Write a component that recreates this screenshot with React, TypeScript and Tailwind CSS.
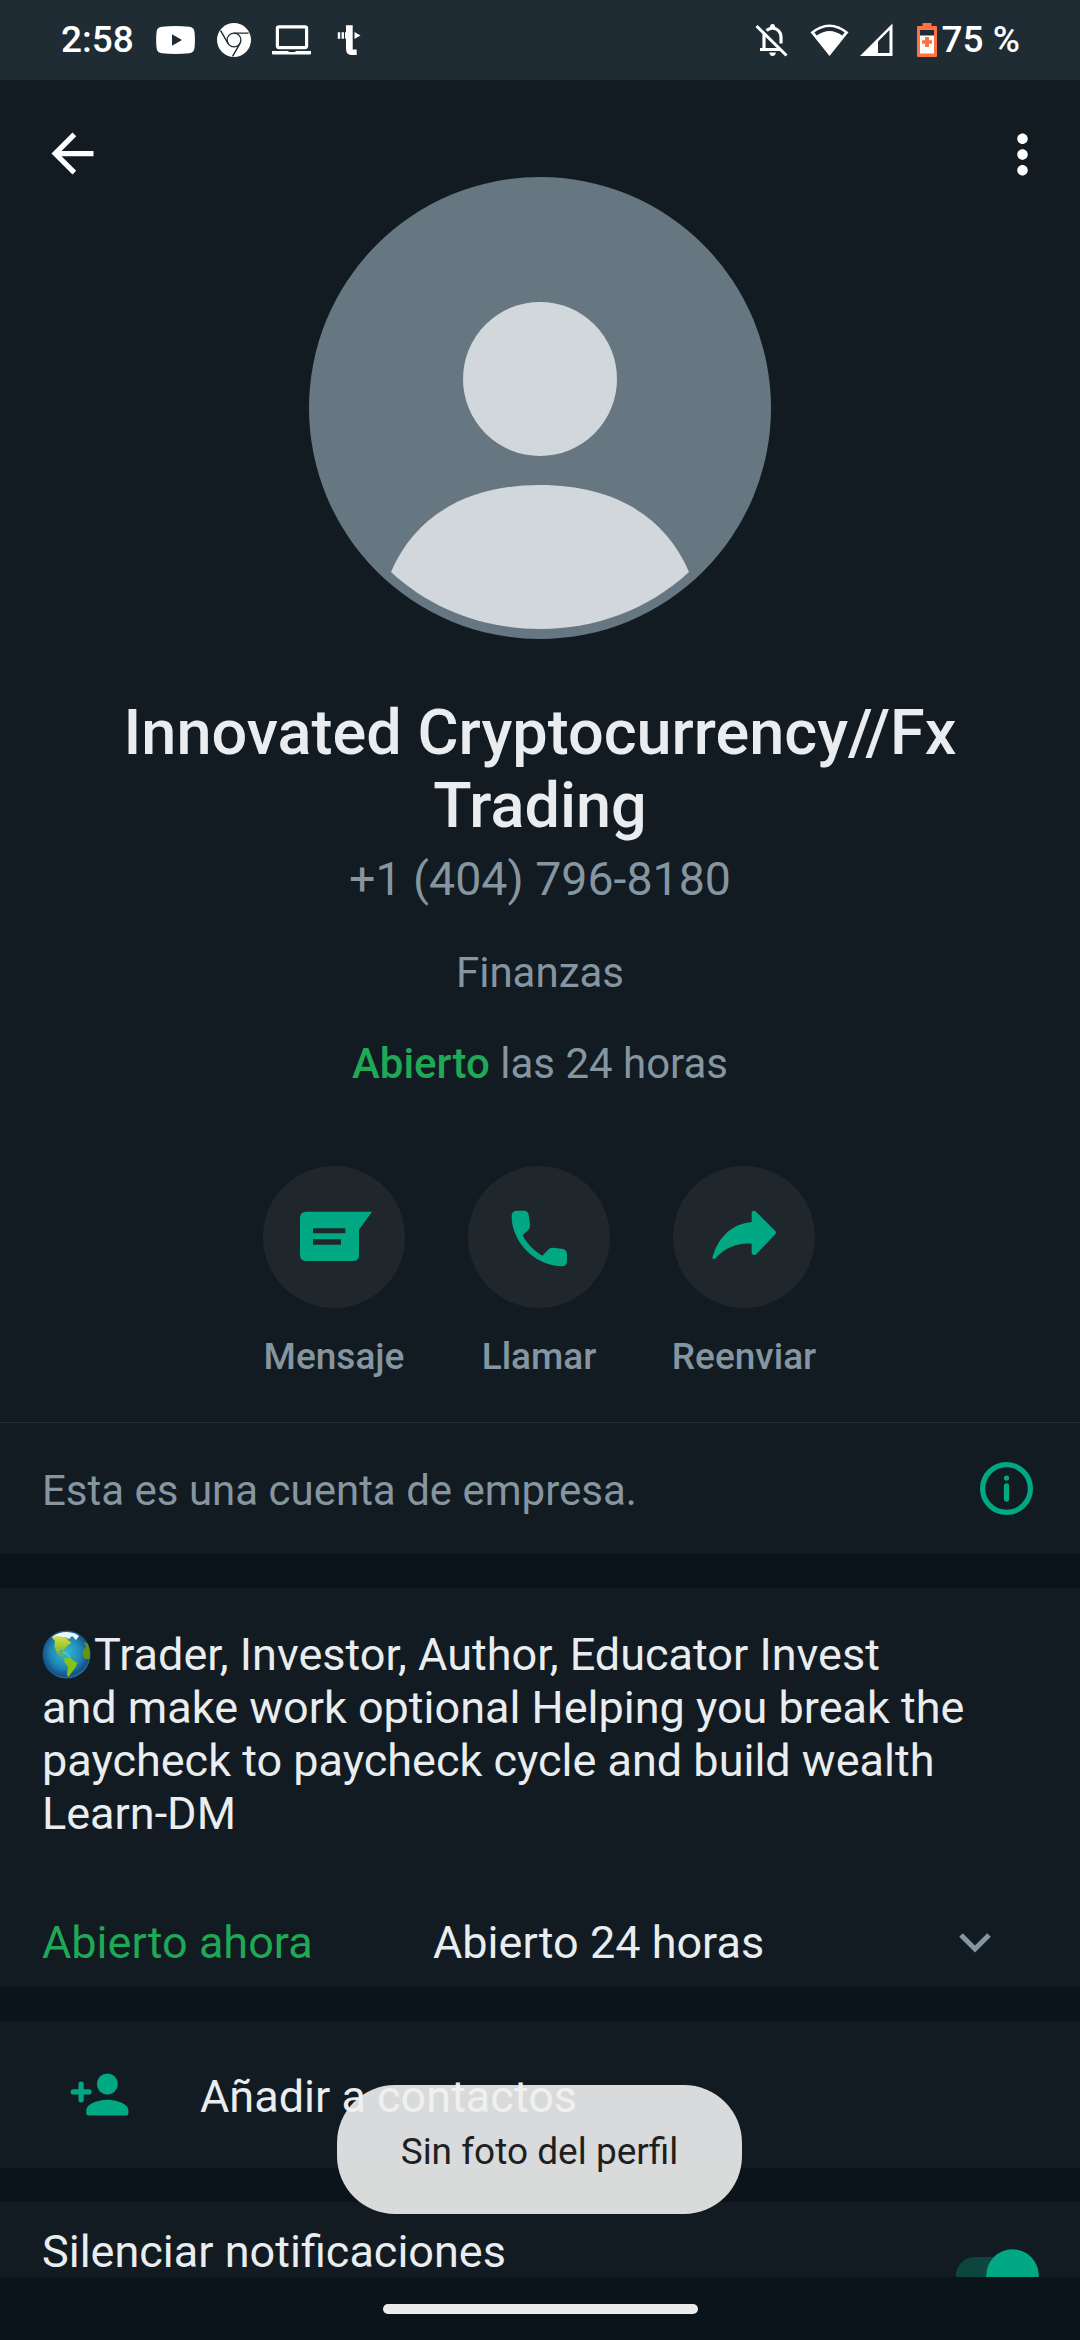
import React from "react";
import { MdArrowBack, MdMoreVert } from "react-icons/md";

interface AccionProps {
  texto: string;
  children: React.ReactNode;
}

function BarraEstado() {
  return (
    <div className="flex h-[80px] shrink-0 items-center bg-[#202c33] pl-[61px] pr-[60px] text-white">
      <span className="w-[95px] text-[37px] font-medium leading-[44px]">2:58</span>

      {/* Notificaciones */}
      <svg className="h-[28px] w-[39px]" viewBox="0 0 39 28" fill="currentColor">
        <path
          fillRule="evenodd"
          d="M6 .8Q19.500-.7 33 .8Q38 1 38.500 6Q39.400 14 38.500 22Q38 27 33 27.300Q19.500 28.700 6 27.300Q1 27 .6 22Q-.4 14 .6 6Q1 1 6 .8ZM16 8.300V19.700L26 14Z"
        />
      </svg>
      <svg className="ml-[22px] h-[34px] w-[34px]" viewBox="0 0 34 34">
        <circle cx="17" cy="17" r="17" fill="white" />
        <circle cx="17" cy="17" r="6.900" fill="none" stroke="#202c33" strokeWidth="1.400" />
        <path d="M17 10.100H31.700M11 20.400L3.600 7.600M23 20.400L15.600 33.300" stroke="#202c33" strokeWidth="1.400" />
      </svg>
      <svg className="ml-[21px] h-[30px] w-[39px]" viewBox="0 0 39 30" fill="none">
        <rect x="5.400" y="1.800" width="29.200" height="20.800" rx="1.500" stroke="white" strokeWidth="3.200" />
        <path d="M0 26H16L17 27H23L24 26H39V28.500Q39 29.500 38 29.500H1Q0 29.500 0 28.500Z" fill="white" />
      </svg>
      <svg className="ml-[26px] h-[32px] w-[25px]" viewBox="0 0 25 32" fill="white">
        <path d="M.8 8.200H3.200V14.800H.8ZM4.600 8.200H7V14.800H4.600ZM9 1.300H15.700V25.500H19.700V31H15Q9 31 9 25V14.800H8V8.200H9ZM17.500 8L23.500 11.400L17.500 15Z" />
      </svg>

      {/* Sistema */}
      <svg className="ml-auto h-[34px] w-[33px]" viewBox="0 0 33 34" fill="none" stroke="white">
        <path d="M9 11V26M5 26.500H27" strokeWidth="3.200" />
        <path d="M11.500 7.500C19 1.500 26 8 26 14V20.500" strokeWidth="3.200" />
        <path d="M15 4Q15 1 17.500 1Q20 1 20 4ZM14.200 29.500H21Q20 33 17.500 33Q15 33 14.200 29.500Z" fill="white" stroke="none" />
        <path d="M2.500 1L33 31.500" stroke="#202c33" strokeWidth="3" />
        <path d="M1.500 3L31.500 32.500" strokeWidth="3" />
      </svg>
      <svg className="ml-[22px] h-[34px] w-[39px]" viewBox="0 0 39 34">
        <path d="M.5 9.300Q19.500-6.500 38.500 9.300L19.500 33Z" fill="white" />
        <path d="M4.300 9.600Q19.500-1.500 34.700 9.600L32.200 12.600Q19.500 3.600 6.800 12.600Z" fill="#202c33" />
      </svg>
      <svg className="ml-[11px] h-[34px] w-[34px]" viewBox="0 0 34 34">
        <path d="M0 33L32.500 .5V33Z" fill="white" />
        <path d="M18 18.500L29.500 7V30H18Z" fill="#202c33" />
      </svg>
      <svg className="ml-[23px] h-[34px] w-[20px]" viewBox="0 0 20 34">
        <path d="M5.500 0H14.500V3H19Q20 3 20 4V33Q20 34 19 34H1Q0 34 0 33V4Q0 3 1 3H5.500Z" fill="#ff7043" />
        <path d="M3 7H17V13H3Z" fill="#202c33" />
        <path d="M3 12.500H17V30.500H3Z" fill="white" />
        <path d="M8 14H12V17.200H15V20.800H12V24H8V20.800H5V17.200H8Z" fill="#ff7043" />
      </svg>
      <span className="ml-[5px] whitespace-nowrap text-[37px] font-medium leading-[44px]">75 %</span>
    </div>
  );
}

function Accion({ texto, children }: AccionProps) {
  return (
    <button className="flex w-[142px] flex-col items-center gap-[27px]">
      <span className="h-[142px] w-[142px] rounded-full bg-[#1f272d]">
        <svg className="h-full w-full" viewBox="0 0 426 426" fill="#00a884">
          {children}
        </svg>
      </span>
      <span className="whitespace-nowrap text-[37px] font-medium leading-[44px] text-[#8696a0]">{texto}</span>
    </button>
  );
}

function Mundo() {
  return (
    <svg className="mr-[3px] -mb-[9px] -mt-[4px] inline-block h-[49px] w-[49px] align-baseline" viewBox="0 0 49 49">
      <defs>
        <radialGradient id="mar" cx="48%" cy="46%" r="54%">
          <stop offset="0" stopColor="#32bdd4" />
          <stop offset="0.600" stopColor="#2086b4" />
          <stop offset="0.900" stopColor="#145086" />
          <stop offset="1" stopColor="#2a6f9f" />
        </radialGradient>
        <linearGradient id="tierra" x1="0" y1="0" x2="0" y2="1">
          <stop offset="0" stopColor="#d5e04a" />
          <stop offset="1" stopColor="#6fae14" />
        </linearGradient>
      </defs>
      <circle cx="24.500" cy="24.500" r="24" fill="url(#mar)" />
      <path d="M10 7Q17 1.500 27 2.200Q34 3 37 6L34 10L30 6L27 9L23 7L19 8Z" fill="#eef8fb" />
      <path
        d="M9.500 7L15 6L24 7.500L26 10L29.500 13L26 15L22.500 19L20.500 20.500L18 20L17.500 23L20 25L22.500 27L20 27.500L15 23L12.500 17L13 11Z"
        fill="url(#tierra)"
      />
      <path d="M22.500 28L28 27.500L32 31L35.500 33L33 38L30 42L26.500 47L25 45L26 37L22.500 32Z" fill="#86c316" />
      <path d="M42 12L45.500 13.500Q49 21 47.500 29L43 29L40.500 25L41 20L44 17Z" fill="#669512" />
      <path d="M20 22L25 24L28 27" fill="none" stroke="#a9cf4a" />
    </svg>
  );
}

function Perfil() {
  return (
    <section className="h-[1342px] shrink-0">
      <header className="flex h-[97px] items-start justify-between pl-[41px] pr-[26px] pt-[42px] text-white">
        <MdArrowBack className="shrink-0" size={63} />
        <MdMoreVert className="shrink-0 mt-px" size={63} />
      </header>

      <div className="flex flex-col items-center text-center">
        <svg className="h-[462px] w-[462px]" viewBox="0 0 462 462">
          <circle cx="231" cy="231" r="231" fill="#667781" />
          <circle cx="231" cy="202" r="77" fill="#d1d7db" />
          <path
            d="M82 395C105 341 155 308 231 308S357 341 380 395C339 433 286 452 231 452S123 433 82 395Z"
            fill="#d1d7db"
          />
        </svg>

        <h1 className="mt-[57px] text-[63px] font-medium leading-[73px] text-[#e9edef]">
          Innovated Cryptocurrency//Fx
          <br />
          Trading
        </h1>
        <p className="mt-[9px] text-[46.5px] leading-[56px] text-[#8696a0]">+1 (404) 796-8180</p>
        <p className="mt-[41px] text-[42px] leading-[50px] text-[#8696a0]">Finanzas</p>
        <p className="mt-[41px] text-[42px] leading-[50px] text-[#8696a0]">
          <span className="font-medium text-[#1fa855]">Abierto</span> las 24 horas
        </p>
      </div>

      <div className="mt-[77px] flex justify-center gap-[63px] pr-[2px]">
        <Accion texto="Mensaje">
          <path
            fillRule="evenodd"
            d="M130 137H327L288 191V267Q288 285 270 285H130Q111 285 111 267V156Q111 137 130 137ZM150 187V202H247V187ZM150 220V236H234V220Z"
          />
        </Accion>
        <Accion texto="Llamar">
          <path d="M148 134H168Q181 134 182.500 149L186 176Q187 185 181 191L164 208C176 233 198 255 223 269L240 252Q246 244 255 245L281 248Q297 250 297 265V284Q297 301 280 301C195 299 128 220 131 148Q132 134 148 134Z" />
        </Accion>
        <Accion texto="Reenviar">
          <path d="M236 168V142Q236 134 243 134Q246 134 249 137L307 195Q311 200 307 205L251 263Q248 267 243 267Q236 267 236 259V233C190 230 157 246 128 276Q124 280 121 278Q117 277 119 272C138 210 177 174 236 168Z" />
        </Accion>
      </div>
    </section>
  );
}

export default function App() {
  return (
    <main className="relative flex h-[2340px] w-[1080px] flex-col overflow-hidden bg-[#121b22] font-[Roboto,sans-serif] text-[#e9edef]">
      <BarraEstado />
      <Perfil />

      {/* Cuenta de empresa */}
      <section className="flex h-[132px] shrink-0 items-center justify-between border-t border-[#202c33] px-[42px]">
        <p className="pt-1 text-[42px] leading-[50px] text-[#8696a0]">Esta es una cuenta de empresa.</p>
        <svg className="h-[63px] w-[63px]" viewBox="0 0 24 24" fill="none" stroke="#00a884" strokeWidth="2" strokeLinecap="round">
          <circle cx="12" cy="12" r="9.100" />
          <path d="M12 11V16M12 8V8.010" />
        </svg>
      </section>

      <div className="h-[34px] shrink-0 bg-[#0b141a]" />

      {/* Descripción y horario */}
      <section className="h-[399px] shrink-0 px-[42px] pt-[40px] text-[45px] leading-[53px]">
        <p className="h-[212px] whitespace-nowrap">
          <Mundo />
          Trader, Investor, Author, Educator Invest
          <br />
          and make work optional Helping you break the
          <br />
          paycheck to paycheck cycle and build wealth
          <br />
          Learn-DM
        </p>
        <div className="mt-[76px] flex items-center">
          <span className="w-[391px] text-[#1fa855]">Abierto ahora</span>
          <span>Abierto 24 horas</span>
          <svg className="ml-auto mr-[47px] h-[20px] w-[32px]" viewBox="0 0 32 20" fill="none">
            <path d="M2 2L16 16L30 2" stroke="#8696a0" strokeWidth="5" />
          </svg>
        </div>
      </section>

      <div className="h-[34px] shrink-0 bg-[#0b141a]" />

      <section className="flex h-[147px] shrink-0 items-center gap-[69px] pl-[68px]">
        <svg className="h-[63px] w-[63px]" viewBox="0 0 24 24" fill="#00a884">
          <circle cx="15" cy="8" r="4" />
          <path d="M7 18C7 15.300 12.300 14 15 14S23 15.300 23 18V19.200Q23 20 22.200 20H7.800Q7 20 7 19.200Z" />
          <path d="M2 11H8M5 8V14" stroke="#00a884" strokeWidth="2" strokeLinecap="round" />
        </svg>
        <span className="pt-1 text-[45px] leading-[53px]">Añadir a contactos</span>
      </section>

      <div className="h-[34px] shrink-0 bg-[#0b141a]" />

      <section className="flex h-[75px] shrink-0 items-start justify-between overflow-hidden pl-[42px] pr-[41px] pt-[23px]">
        <span className="text-[45px] leading-[53px]">Silenciar notificaciones</span>
        <svg className="mt-[24px] h-[53px] w-[83px] shrink-0" viewBox="0 0 83 53">
          <rect x="0" y="8" width="75" height="37" rx="18.500" fill="#0c463f" />
          <circle cx="56.500" cy="26.500" r="26.300" fill="#00a884" />
        </svg>
      </section>

      {/* Barra de navegación */}
      <div className="flex h-[63px] shrink-0 justify-center bg-[#0b141a] pt-[27px]">
        <div className="h-[10px] w-[315px] rounded-full bg-[#ebedec]" />
      </div>

      {/* Aviso flotante */}
      <div className="absolute left-[337px] top-[2085px] flex h-[129px] w-[405px] items-center justify-center rounded-[58px] bg-[#efefef]/90">
        <span className="whitespace-nowrap pt-[4px] text-[37px] leading-[44px] text-[#1f1f1f]">Sin foto del perfil</span>
      </div>
    </main>
  );
}
